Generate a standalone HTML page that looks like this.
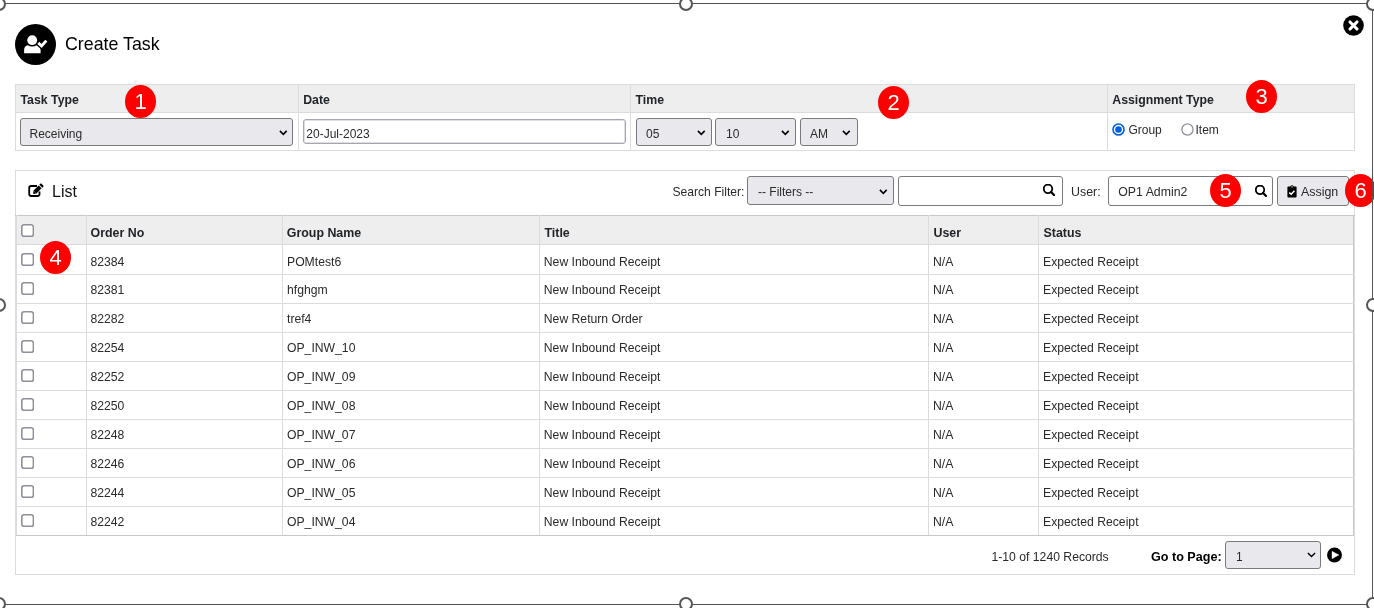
<!DOCTYPE html>
<html><head><meta charset="utf-8">
<style>
*{box-sizing:border-box;margin:0;padding:0}
html,body{width:1374px;height:608px;overflow:hidden;background:#fff}
body{position:relative;font-family:"Liberation Sans",sans-serif;color:#2a2a2a;font-size:12px}
.a{position:absolute}
.t{position:absolute;white-space:nowrap;line-height:1}
.hl{position:absolute;height:1px;background:#dcdcdc}
.vl{position:absolute;width:1px;background:#dcdcdc}
.sel{position:absolute;background:#e9e9ed;border:1px solid #7a7a7a;border-radius:3px}
.inp{position:absolute;background:#fff;border:1px solid #7a7a7a;border-radius:3px}
.chev{position:absolute}
.cb{position:absolute;width:13px;height:13px;background:#fff}
.badge{position:absolute;width:31px;height:33px;border-radius:50%;background:#f00;color:#fff;font-size:22px;text-align:center;line-height:33px}
.fr{position:absolute;background:#555}
.hd{position:absolute;width:14px;height:14px;border:2px solid #555;border-radius:50%;background:#fff}
.th{font-weight:bold;color:#212529}
</style></head><body>
<div id="root" style="position:absolute;left:0;top:0;width:1374px;height:608px;will-change:transform">

<!-- header -->
<div class="a" style="left:15px;top:23.5px;width:41px;height:41px;border-radius:50%;background:#000"></div>
<svg class="a" style="left:15px;top:23.5px" width="41" height="41" viewBox="0 0 41 41">
  <path d="M9.1 29.3 L9.1 26 Q9.1 21.2 14 21.2 L20.7 21.2 Q25.6 21.2 25.6 26 L25.6 29.3 Z" fill="#fff"/>
  <circle cx="17.2" cy="16.2" r="6.3" fill="#000"/>
  <circle cx="17.2" cy="16.2" r="4.9" fill="#fff"/>
  <path d="M23.3 18.9 L26.6 22 L31.3 16.6" stroke="#000" stroke-width="5.5" fill="none"/>
  <path d="M23.3 18.9 L26.6 22 L31.3 16.6" stroke="#fff" stroke-width="2.9" fill="none"/>
</svg>
<div class="t" style="left:65px;top:36px;font-size:17.8px;color:#000">Create Task</div>

<!-- close -->
<svg class="a" style="left:1343px;top:14.7px" width="21" height="21" viewBox="0 0 21 21">
  <circle cx="10.5" cy="10.5" r="10.3" fill="#000"/>
  <path d="M7 7 L14 14 M14 7 L7 14" stroke="#fff" stroke-width="3.1" stroke-linecap="round"/>
</svg>

<!-- top table -->
<div class="a" style="left:15px;top:84px;width:1340px;height:67px;border:1px solid #dcdcdc"></div>
<div class="a" style="left:16px;top:85px;width:1338px;height:27px;background:#eee"></div>
<div class="hl" style="left:16px;top:112px;width:1338px"></div>
<div class="vl" style="left:298px;top:85px;height:65px"></div>
<div class="vl" style="left:630px;top:85px;height:65px"></div>
<div class="vl" style="left:1107px;top:85px;height:65px"></div>
<div class="t th" style="left:20.5px;top:94px;font-size:12.3px">Task Type</div>
<div class="t th" style="left:303.2px;top:94px;font-size:12.3px">Date</div>
<div class="t th" style="left:635.5px;top:94px;font-size:12.3px">Time</div>
<div class="t th" style="left:1112.3px;top:94px;font-size:12.3px">Assignment Type</div>

<div class="sel" style="left:20px;top:118px;width:273px;height:28px"></div>
<div class="t" style="left:29.5px;top:128px">Receiving</div>
<svg class="chev" style="left:278.8px;top:129.5px" width="9" height="6" viewBox="0 0 9 6"><path d="M0.9 0.9 L4.3 4.4 L7.7 0.9" stroke="#000" stroke-width="1.55" fill="none"/></svg>

<div class="inp" style="left:303px;top:119px;width:323px;height:25px;border-color:#a6a6b1;border-radius:3px;box-shadow:inset 0 0 0 1px #dedee4"></div>
<div class="t" style="left:306.3px;top:127.6px">20-Jul-2023</div>

<div class="sel" style="left:636px;top:118px;width:76px;height:28px"></div>
<div class="t" style="left:646px;top:128px">05</div>
<svg class="chev" style="left:696.8px;top:129.5px" width="9" height="6" viewBox="0 0 9 6"><path d="M0.9 0.9 L4.3 4.4 L7.7 0.9" stroke="#000" stroke-width="1.55" fill="none"/></svg>
<div class="sel" style="left:715px;top:118px;width:81px;height:28px"></div>
<div class="t" style="left:726px;top:128px">10</div>
<svg class="chev" style="left:780.8px;top:129.5px" width="9" height="6" viewBox="0 0 9 6"><path d="M0.9 0.9 L4.3 4.4 L7.7 0.9" stroke="#000" stroke-width="1.55" fill="none"/></svg>
<div class="sel" style="left:799.5px;top:118px;width:58px;height:28px"></div>
<div class="t" style="left:810px;top:128px">AM</div>
<svg class="chev" style="left:841.8px;top:129.5px" width="9" height="6" viewBox="0 0 9 6"><path d="M0.9 0.9 L4.3 4.4 L7.7 0.9" stroke="#000" stroke-width="1.55" fill="none"/></svg>

<svg class="a" style="left:1112.2px;top:122.6px" width="13" height="13" viewBox="0 0 13 13"><circle cx="6.5" cy="6.5" r="5.5" fill="#fff" stroke="#0060df" stroke-width="1.6"/><circle cx="6.5" cy="6.5" r="3.3" fill="#0060df"/></svg>
<div class="t" style="left:1128.4px;top:124px">Group</div>
<svg class="a" style="left:1180.8px;top:122.6px" width="13" height="13" viewBox="0 0 13 13"><circle cx="6.5" cy="6.5" r="5.6" fill="#fff" stroke="#8f8f9d" stroke-width="1.3"/></svg>
<div class="t" style="left:1195.5px;top:124px">Item</div>

<!-- list panel -->
<div class="a" style="left:15px;top:170px;width:1340px;height:405px;border:1px solid #dcdcdc"></div>
<svg class="a" style="left:28px;top:183px" width="17" height="15" viewBox="0 0 17 15">
  <path d="M9 3 L3.1 3 Q1.2 3 1.2 4.9 L1.2 11.1 Q1.2 13 3.1 13 L9.6 13 Q11.5 13 11.5 11.1 L11.5 8.4" stroke="#000" stroke-width="1.8" fill="none"/>
  <path d="M7 9 L12.1 3.9" stroke="#000" stroke-width="4.1"/>
  <path d="M12.8 3.2 L14.4 1.6" stroke="#000" stroke-width="4.1"/>
  <path d="M5.6 7.5 L8.5 10.4 L5.1 10.9 Z" fill="#000"/>
</svg>
<div class="t" style="left:52px;top:183.5px;font-size:16px;color:#111">List</div>

<div class="t" style="left:672.5px;top:186px;font-size:12.1px">Search Filter:</div>
<div class="sel" style="left:747px;top:176px;width:147px;height:29px"></div>
<div class="t" style="left:758px;top:186px">-- Filters --</div>
<svg class="chev" style="left:878.8px;top:188.5px" width="9" height="6" viewBox="0 0 9 6"><path d="M0.9 0.9 L4.3 4.4 L7.7 0.9" stroke="#000" stroke-width="1.55" fill="none"/></svg>

<div class="inp" style="left:897.5px;top:175.5px;width:165px;height:30px"></div>
<svg class="a" style="left:1043px;top:184px" width="13" height="13" viewBox="0 0 13 13"><circle cx="5" cy="4.8" r="4.25" stroke="#000" stroke-width="1.8" fill="none"/><path d="M8.1 7.9 L11 10.9" stroke="#000" stroke-width="2.2" stroke-linecap="round"/></svg>

<div class="t" style="left:1071px;top:186px;font-size:12.4px">User:</div>
<div class="inp" style="left:1108px;top:175.5px;width:165px;height:30px"></div>
<div class="t" style="left:1118.3px;top:186px;font-size:12.3px">OP1 Admin2</div>
<svg class="a" style="left:1254.5px;top:184.8px" width="13" height="13" viewBox="0 0 13 13"><circle cx="5" cy="4.8" r="4.25" stroke="#000" stroke-width="1.8" fill="none"/><path d="M8.1 7.9 L11 10.9" stroke="#000" stroke-width="2.2" stroke-linecap="round"/></svg>

<div class="sel" style="left:1277px;top:176px;width:72px;height:30px"></div>
<svg class="a" style="left:1286.5px;top:184.5px" width="10" height="13" viewBox="0 0 10 13">
  <rect x="0.4" y="1.6" width="9.2" height="11" rx="1" fill="#000"/>
  <circle cx="5" cy="2.1" r="1.8" fill="#000"/>
  <circle cx="5" cy="1.9" r="0.7" fill="#fff"/>
  <path d="M2.2 7.7 L4.2 9.2 L7.4 5.8" stroke="#fff" stroke-width="1.5" fill="none"/>
</svg>
<div class="t" style="left:1301px;top:185.5px;font-size:12.4px">Assign</div>

<!-- data table -->
<div class="a" style="left:16px;top:216px;width:1338px;height:28px;background:#eee"></div>
<div class="hl" style="left:16px;top:244px;width:1338px;background:#dcdcdc"></div>
<div class="hl" style="left:15px;top:215px;width:1340px;background:#c8c8c8"></div>
<div class="vl" style="left:16px;top:215px;height:321px;background:#dcdcdc"></div>
<div class="vl" style="left:1353px;top:215px;height:321px;background:#c8c8c8"></div>
<div id="rows"></div>
<div class="vl" style="left:86px;top:215px;height:320px"></div>
<div class="vl" style="left:282px;top:215px;height:320px"></div>
<div class="vl" style="left:539px;top:215px;height:320px"></div>
<div class="vl" style="left:928px;top:215px;height:320px"></div>
<div class="vl" style="left:1038px;top:215px;height:320px"></div>
<svg class="cb" style="left:21px;top:224px" viewBox="0 0 13 13"><rect x="0.8" y="0.8" width="11.6" height="11.6" rx="2.3" fill="#fff" stroke="#8f8f9d" stroke-width="1.6"/></svg>
<div class="t th" style="left:90.5px;top:227px;font-size:12.4px">Order No</div>
<div class="t th" style="left:286.8px;top:227px;font-size:12.4px">Group Name</div>
<div class="t th" style="left:544.5px;top:227px;font-size:12.4px">Title</div>
<div class="t th" style="left:933.5px;top:227px;font-size:12.4px">User</div>
<div class="t th" style="left:1043.5px;top:227px;font-size:12.4px">Status</div>

<div class="hl" style="left:16px;top:274px;width:1338px"></div>
<svg class="cb" style="left:21px;top:253px" viewBox="0 0 13 13"><rect x="0.8" y="0.8" width="11.6" height="11.6" rx="2.3" fill="#fff" stroke="#8f8f9d" stroke-width="1.6"/></svg>
<div class="t" style="left:90.4px;top:255.5px;font-size:12.2px">82384</div>
<div class="t" style="left:287px;top:255.5px;font-size:12.2px">POMtest6</div>
<div class="t" style="left:543.8px;top:255.5px;font-size:12.2px">New Inbound Receipt</div>
<div class="t" style="left:933px;top:255.5px;font-size:12.2px">N/A</div>
<div class="t" style="left:1043px;top:255.5px;font-size:12.2px">Expected Receipt</div>
<div class="hl" style="left:16px;top:303px;width:1338px"></div>
<svg class="cb" style="left:21px;top:282px" viewBox="0 0 13 13"><rect x="0.8" y="0.8" width="11.6" height="11.6" rx="2.3" fill="#fff" stroke="#8f8f9d" stroke-width="1.6"/></svg>
<div class="t" style="left:90.4px;top:284px;font-size:12.2px">82381</div>
<div class="t" style="left:287px;top:284px;font-size:12.2px">hfghgm</div>
<div class="t" style="left:543.8px;top:284px;font-size:12.2px">New Inbound Receipt</div>
<div class="t" style="left:933px;top:284px;font-size:12.2px">N/A</div>
<div class="t" style="left:1043px;top:284px;font-size:12.2px">Expected Receipt</div>
<div class="hl" style="left:16px;top:332px;width:1338px"></div>
<svg class="cb" style="left:21px;top:311px" viewBox="0 0 13 13"><rect x="0.8" y="0.8" width="11.6" height="11.6" rx="2.3" fill="#fff" stroke="#8f8f9d" stroke-width="1.6"/></svg>
<div class="t" style="left:90.4px;top:313px;font-size:12.2px">82282</div>
<div class="t" style="left:287px;top:313px;font-size:12.2px">tref4</div>
<div class="t" style="left:543.8px;top:313px;font-size:12.2px">New Return Order</div>
<div class="t" style="left:933px;top:313px;font-size:12.2px">N/A</div>
<div class="t" style="left:1043px;top:313px;font-size:12.2px">Expected Receipt</div>
<div class="hl" style="left:16px;top:361px;width:1338px"></div>
<svg class="cb" style="left:21px;top:340px" viewBox="0 0 13 13"><rect x="0.8" y="0.8" width="11.6" height="11.6" rx="2.3" fill="#fff" stroke="#8f8f9d" stroke-width="1.6"/></svg>
<div class="t" style="left:90.4px;top:342px;font-size:12.2px">82254</div>
<div class="t" style="left:287px;top:342px;font-size:12.2px">OP_INW_10</div>
<div class="t" style="left:543.8px;top:342px;font-size:12.2px">New Inbound Receipt</div>
<div class="t" style="left:933px;top:342px;font-size:12.2px">N/A</div>
<div class="t" style="left:1043px;top:342px;font-size:12.2px">Expected Receipt</div>
<div class="hl" style="left:16px;top:390px;width:1338px"></div>
<svg class="cb" style="left:21px;top:369px" viewBox="0 0 13 13"><rect x="0.8" y="0.8" width="11.6" height="11.6" rx="2.3" fill="#fff" stroke="#8f8f9d" stroke-width="1.6"/></svg>
<div class="t" style="left:90.4px;top:371px;font-size:12.2px">82252</div>
<div class="t" style="left:287px;top:371px;font-size:12.2px">OP_INW_09</div>
<div class="t" style="left:543.8px;top:371px;font-size:12.2px">New Inbound Receipt</div>
<div class="t" style="left:933px;top:371px;font-size:12.2px">N/A</div>
<div class="t" style="left:1043px;top:371px;font-size:12.2px">Expected Receipt</div>
<div class="hl" style="left:16px;top:419px;width:1338px"></div>
<svg class="cb" style="left:21px;top:398px" viewBox="0 0 13 13"><rect x="0.8" y="0.8" width="11.6" height="11.6" rx="2.3" fill="#fff" stroke="#8f8f9d" stroke-width="1.6"/></svg>
<div class="t" style="left:90.4px;top:400px;font-size:12.2px">82250</div>
<div class="t" style="left:287px;top:400px;font-size:12.2px">OP_INW_08</div>
<div class="t" style="left:543.8px;top:400px;font-size:12.2px">New Inbound Receipt</div>
<div class="t" style="left:933px;top:400px;font-size:12.2px">N/A</div>
<div class="t" style="left:1043px;top:400px;font-size:12.2px">Expected Receipt</div>
<div class="hl" style="left:16px;top:448px;width:1338px"></div>
<svg class="cb" style="left:21px;top:427px" viewBox="0 0 13 13"><rect x="0.8" y="0.8" width="11.6" height="11.6" rx="2.3" fill="#fff" stroke="#8f8f9d" stroke-width="1.6"/></svg>
<div class="t" style="left:90.4px;top:429px;font-size:12.2px">82248</div>
<div class="t" style="left:287px;top:429px;font-size:12.2px">OP_INW_07</div>
<div class="t" style="left:543.8px;top:429px;font-size:12.2px">New Inbound Receipt</div>
<div class="t" style="left:933px;top:429px;font-size:12.2px">N/A</div>
<div class="t" style="left:1043px;top:429px;font-size:12.2px">Expected Receipt</div>
<div class="hl" style="left:16px;top:477px;width:1338px"></div>
<svg class="cb" style="left:21px;top:456px" viewBox="0 0 13 13"><rect x="0.8" y="0.8" width="11.6" height="11.6" rx="2.3" fill="#fff" stroke="#8f8f9d" stroke-width="1.6"/></svg>
<div class="t" style="left:90.4px;top:458px;font-size:12.2px">82246</div>
<div class="t" style="left:287px;top:458px;font-size:12.2px">OP_INW_06</div>
<div class="t" style="left:543.8px;top:458px;font-size:12.2px">New Inbound Receipt</div>
<div class="t" style="left:933px;top:458px;font-size:12.2px">N/A</div>
<div class="t" style="left:1043px;top:458px;font-size:12.2px">Expected Receipt</div>
<div class="hl" style="left:16px;top:506px;width:1338px"></div>
<svg class="cb" style="left:21px;top:485px" viewBox="0 0 13 13"><rect x="0.8" y="0.8" width="11.6" height="11.6" rx="2.3" fill="#fff" stroke="#8f8f9d" stroke-width="1.6"/></svg>
<div class="t" style="left:90.4px;top:487px;font-size:12.2px">82244</div>
<div class="t" style="left:287px;top:487px;font-size:12.2px">OP_INW_05</div>
<div class="t" style="left:543.8px;top:487px;font-size:12.2px">New Inbound Receipt</div>
<div class="t" style="left:933px;top:487px;font-size:12.2px">N/A</div>
<div class="t" style="left:1043px;top:487px;font-size:12.2px">Expected Receipt</div>
<div class="hl" style="left:16px;top:535px;width:1338px;background:#c8c8c8"></div>
<svg class="cb" style="left:21px;top:514px" viewBox="0 0 13 13"><rect x="0.8" y="0.8" width="11.6" height="11.6" rx="2.3" fill="#fff" stroke="#8f8f9d" stroke-width="1.6"/></svg>
<div class="t" style="left:90.4px;top:516px;font-size:12.2px">82242</div>
<div class="t" style="left:287px;top:516px;font-size:12.2px">OP_INW_04</div>
<div class="t" style="left:543.8px;top:516px;font-size:12.2px">New Inbound Receipt</div>
<div class="t" style="left:933px;top:516px;font-size:12.2px">N/A</div>
<div class="t" style="left:1043px;top:516px;font-size:12.2px">Expected Receipt</div>

<!-- footer -->
<div class="t" style="left:991.5px;top:551px;font-size:12.2px">1-10 of 1240 Records</div>
<div class="t" style="left:1151px;top:550.5px;font-weight:bold;color:#000;font-size:12.6px">Go to Page:</div>
<div class="sel" style="left:1225px;top:541px;width:96px;height:28px"></div>
<div class="t" style="left:1236px;top:551px">1</div>
<svg class="chev" style="left:1306.5px;top:552.3px" width="9" height="6" viewBox="0 0 9 6"><path d="M0.9 0.9 L4.5 4.6 L8.1 0.9" stroke="#000" stroke-width="1.4" fill="none"/></svg>
<svg class="a" style="left:1327px;top:546.5px" width="16" height="16" viewBox="0 0 16 16"><circle cx="7.5" cy="8" r="7.45" fill="#000"/><path d="M5 4.3 L11.9 8 L5 11.7 Z" fill="#fff" stroke="#fff" stroke-width="0.4" stroke-linejoin="round"/></svg>

<!-- badges -->
<div class="badge" style="left:125px;top:85px">1</div>
<div class="badge" style="left:878px;top:86px">2</div>
<div class="badge" style="left:1246px;top:80px">3</div>
<div class="badge" style="left:40px;top:241px">4</div>
<div class="badge" style="left:1210px;top:174px">5</div>
<div class="badge" style="left:1345px;top:174px">6</div>

<!-- frame -->
<div class="fr" style="left:0;top:3px;width:1373px;height:1px"></div>
<div class="fr" style="left:0;top:604px;width:1373px;height:1px"></div>
<div class="fr" style="left:1372px;top:3px;width:1px;height:602px"></div>
<div class="hd" style="left:-8px;top:-3.5px"></div>
<div class="hd" style="left:679px;top:-3.5px"></div>
<div class="hd" style="left:1366px;top:-3.5px"></div>
<div class="hd" style="left:-8px;top:298px"></div>
<div class="hd" style="left:1366px;top:298px"></div>
<div class="hd" style="left:-8px;top:597px"></div>
<div class="hd" style="left:679px;top:597px"></div>
<div class="hd" style="left:1366px;top:597px"></div>
</div>
</body></html>
